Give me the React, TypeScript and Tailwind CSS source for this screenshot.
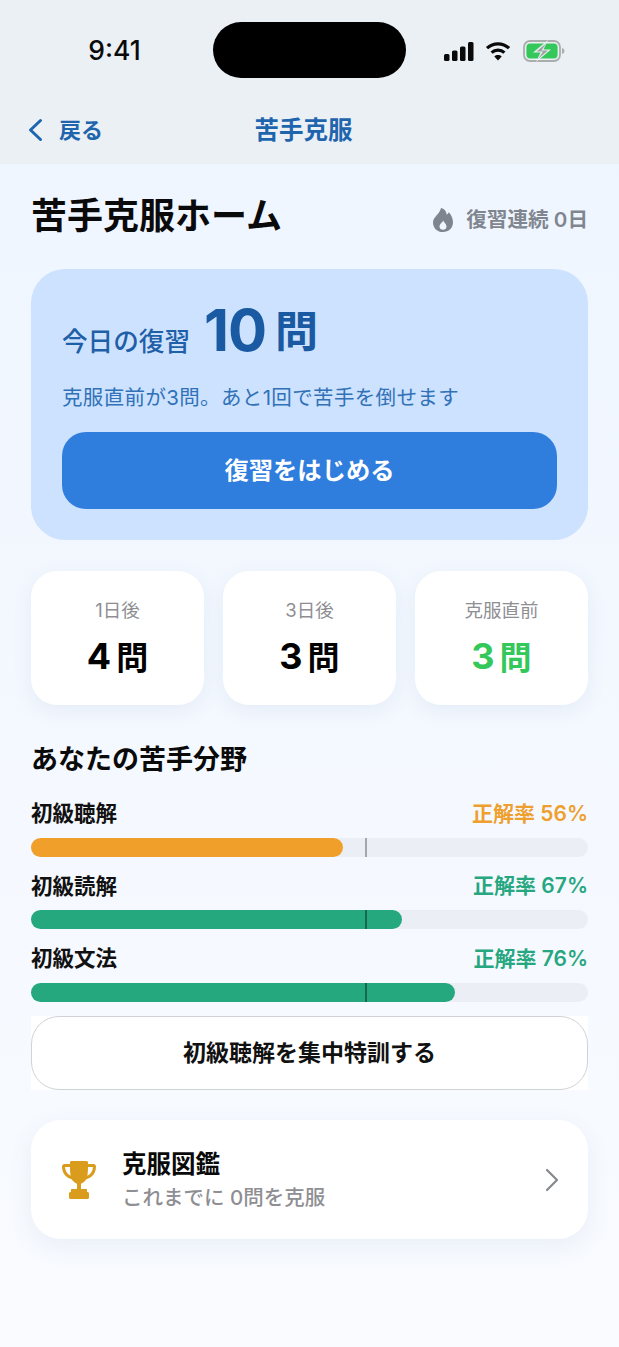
import React from 'react';

const FONT = "font-['Inter','Noto_Sans_CJK_JP',sans-serif]";

const SignalIcon = () => (
  <svg width="30" height="19" viewBox="0 0 30 19" fill="#0a0a0a">
    <rect x="0" y="12" width="5.5" height="7" rx="1.5" />
    <rect x="8" y="8.5" width="5.5" height="10.5" rx="1.5" />
    <rect x="16" y="4.5" width="5.5" height="14.5" rx="1.5" />
    <rect x="24" y="0" width="5.5" height="19" rx="1.5" />
  </svg>
);

const WifiIcon = () => (
  <svg width="26" height="20" viewBox="0 0 26 20" fill="none" stroke="#0a0a0a" strokeWidth="3.2">
    <path d="M2 7.2C8.2 1.4 17.8 1.4 24 7.2" />
    <path d="M6.6 11.6C10.2 8.3 15.8 8.3 19.4 11.6" />
    <path d="M13 19.5L9.3 15.4C11.4 13.6 14.6 13.6 16.7 15.4Z" fill="#0a0a0a" stroke="none" />
  </svg>
);

const BatteryIcon = () => (
  <svg width="42" height="22" viewBox="0 0 42 22" fill="none">
    <rect x="1" y="1" width="36" height="20" rx="6" stroke="#a9aeac" strokeWidth="1.8" />
    <rect x="3.4" y="3.4" width="31.2" height="15.2" rx="4" fill="#34c759" />
    <path d="M39 8v6c1.600-.4 2.400-1.600 2.400-3s-.8-2.600-2.400-3z" fill="#a9aeac" />
    <path d="M25 0L10 12.500h7.500L13 22l15-12.500h-7.500z" fill="#e9eef3" />
    <path d="M23 3.500L13.500 11.500h6.500L15.500 18.500 25 10.500h-6.500z" fill="#9aa39f" />
  </svg>
);

const FlameIcon = () => (
  <svg width="20" height="24" viewBox="0 0 20 24">
    <path
      fillRule="evenodd"
      fill="#7e858f"
      d="M8 0c4.500 1.500 5.500 4 5.500 6.500 1-.4 1.800-1.200 2.200-2.300C18.200 6.800 20 10.300 20 14.200 20 20 15.700 24 10 24S0 20 0 14.400C0 9 6.500 6.500 8 0ZM10.200 12.500C9.500 14.500 6.500 15.800 6.500 18.400c0 2 1.500 3.300 3.500 3.300s3.500-1.300 3.500-3.300c0-2.600-2.600-3.900-3.300-5.900Z"
    />
  </svg>
);

const TrophyIcon = () => (
  <svg width="34" height="38" viewBox="0 0 34 38">
    <path
      fill="#d99c1c"
      fillRule="evenodd"
      d="M8 1.500C8 .7 8.700 0 9.500 0h15c.8 0 1.500.7 1.500 1.500V3h5.500C32.900 3 34 4.100 34 5.500c0 6.200-3.800 11.500-9.700 12.700-1.300 2.100-3.200 3.700-5.300 4.500V28h-4v-5.300c-2.100-.8-4-2.400-5.300-4.500C3.800 17 0 11.700 0 5.500 0 4.100 1.100 3 2.500 3H8ZM3 6c.2 3.900 2.200 7.300 5.600 8.800C8.200 12.300 8 9.200 8 6ZM26 6c0 3.200-.2 6.300-.6 8.800 3.400-1.500 5.400-4.900 5.600-8.800ZM9 28.500c0-.3.200-.5.500-.5h15c.3 0 .5.200.5.500V31H9ZM7 32.500C7 31.700 7.700 31 8.500 31h17c.8 0 1.500.7 1.500 1.500v4c0 .8-.7 1.500-1.500 1.500h-17C7.700 38 7 37.300 7 36.500Z"
    />
  </svg>
);

const StatCard: React.FC<{ label: string; value: number; green?: boolean }> = ({ label, value, green }) => (
  <div className="flex-1 h-[134px] bg-white rounded-[26px] shadow-[0_6px_20px_rgba(90,120,170,0.09)] flex flex-col items-center">
    <div className="mt-[26px] text-[18.5px] leading-[26px] text-[#8e8e93]">{label}</div>
    <div className={`mt-[11px] flex items-baseline gap-[5px] h-[44px] font-semibold ${green ? 'text-[#34c759]' : 'text-black'}`}>
      <span className="text-[36px] leading-[44px] font-bold">{value}</span>
      <span className="text-[32px] leading-[44px]">問</span>
    </div>
  </div>
);

const Subject: React.FC<{ name: string; rate: number; width: number; warn?: boolean }> = ({ name, rate, width, warn }) => (
  <div className="h-[72.500px]">
    <div className="flex items-center justify-between h-[30px]">
      <span className="text-[21.5px] font-semibold text-[#111]">{name}</span>
      <span className={`text-[21px] font-semibold ${warn ? 'text-[#ee9f2d]' : 'text-[#27a77f]'}`}>正解率 {rate}%</span>
    </div>
    <div className="relative mt-[9px] h-[19px] rounded-full bg-[#ebeff5]">
      <div
        className={`h-full rounded-full ${warn ? 'bg-[#f0a02a]' : 'bg-[#25a87e]'}`}
        style={{ width: `${width}px` }}
      />
      {/* 目標ライン */}
      <div className={`absolute top-0 bottom-0 left-[334px] w-[2px] ${warn ? 'bg-[#a3a7ad]' : 'bg-[#17694f]'}`} />
    </div>
  </div>
);

export default function App() {
  return (
    <div className={`${FONT} w-[619px] h-[1347px] overflow-hidden bg-gradient-to-b from-[#eef5ff] to-[#f9fbff]`}>
      <header className="h-[164px] bg-[#ebf0f5]">
        <div className="flex items-start pt-[22px]">
          <div className="w-[213px] pt-[11px] pl-[16px] text-center text-[26.500px] leading-[34px] font-medium text-[#0a0a0a]">
            9:41
          </div>
          <div className="w-[193px] h-[56px] rounded-full bg-black" />
          <div className="flex items-center ml-[38px] mt-[18px]">
            <SignalIcon />
            <div className="ml-[11px]">
              <WifiIcon />
            </div>
            <div className="ml-[12px]">
              <BatteryIcon />
            </div>
          </div>
        </div>
        <nav className="relative flex items-center justify-center h-[34px] mt-[35px] pr-[12px] text-[#1f65ae]">
          <div className="absolute left-[27px] flex items-center gap-[15px] text-[22px] font-semibold">
            <svg width="17" height="24" viewBox="0 0 17 24" fill="none" stroke="#1f65ae" strokeWidth="3" strokeLinecap="round" strokeLinejoin="round">
              <path d="M13.500 2.500L3.500 12l10 9.500" />
            </svg>
            <span>戻る</span>
          </div>
          <span className="text-[24.500px] font-semibold">苦手克服</span>
        </nav>
      </header>

      <main className="px-[31px]">
        <div className="flex items-center justify-between h-[52px] mt-[26px]">
          <h1 className="text-[36px] leading-[48px] font-semibold text-[#0a0a0a]">苦手克服ホーム</h1>
          <div className="flex items-center gap-[13px] mt-[8px] text-[#80868f] text-[20.600px] font-semibold">
            <FlameIcon />
            <span>復習連続 0日</span>
          </div>
        </div>

        <section className="mt-[27px] h-[271px] rounded-[34px] bg-[#cde2fe] px-[31px] pt-[29px]">
          <div className="flex items-baseline h-[64px] text-[#1a5aa3]">
            <span className="text-[25.600px] font-medium text-[#1f5fa8]">今日の復習</span>
            <span className="ml-[14px] text-[58px] leading-[64px] font-bold tracking-[-1px]">10</span>
            <span className="ml-[9px] self-start text-[43px] leading-[66px] font-semibold">問</span>
          </div>
          <p className="mt-[22px] text-[20.500px] tracking-[0.35px] leading-[28px] text-[#3071b8]">克服直前が3問。あと1回で苦手を倒せます</p>
          <button className="mt-[20px] w-full h-[77px] rounded-[24px] bg-[#2f7ddd] text-white text-[24.300px] font-semibold">
            復習をはじめる
          </button>
        </section>

        <section className="flex gap-[19px] mt-[31px]">
          <StatCard label="1日後" value={4} />
          <StatCard label="3日後" value={3} />
          <StatCard label="克服直前" value={3} green />
        </section>

        <h2 className="mt-[36px] text-[27px] leading-[38px] font-semibold text-[#0a0a0a]">あなたの苦手分野</h2>

        <section className="mt-[19.500px]">
          <Subject name="初級聴解" rate={56} width={312} warn />
          <Subject name="初級読解" rate={67} width={371} />
          <Subject name="初級文法" rate={76} width={424} />
        </section>

        <div className="bg-white">
          <button className="block w-full h-[74px] rounded-[28px] border-[1.500px] border-[#cfd2d6] bg-white text-[23px] font-semibold text-[#111]">
            初級聴解を集中特訓する
          </button>
        </div>

        <section className="mt-[30px] h-[119px] rounded-[30px] bg-white shadow-[0_8px_24px_rgba(90,120,170,0.09)] flex items-center pl-[31px] pr-[28px]">
          <TrophyIcon />
          <div className="ml-[26px] flex-1">
            <div className="text-[24.500px] leading-[36px] font-semibold text-[#0a0a0a]">克服図鑑</div>
            <div className="text-[20.500px] leading-[32px] font-medium text-[#8e8e93]">これまでに 0問を克服</div>
          </div>
          <svg width="16" height="24" viewBox="0 0 16 24" fill="none" stroke="#85888d" strokeWidth="2.200" strokeLinecap="round" strokeLinejoin="round">
            <path d="M3 2l10 10L3 22" />
          </svg>
        </section>
      </main>
    </div>
  );
}
